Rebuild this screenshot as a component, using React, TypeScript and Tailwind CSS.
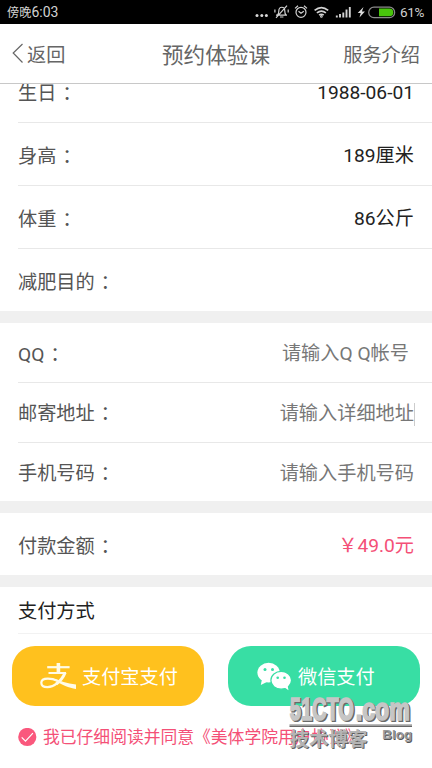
import React from "react";

const font = "font-['Roboto','Noto_Sans_CJK_SC',sans-serif]";

function Colon() {
  return <span lang="zh-TW" className="relative top-px left-px font-['Noto_Sans_CJK_TC',sans-serif]">：</span>;
}

function Row({ label, value, height, tone = "text-[#222]", line = true, shift = "", labelShift = "" }: {
  label: string; value?: React.ReactNode; height: string; tone?: string; line?: boolean; shift?: string; labelShift?: string;
}) {
  return (
    <div className={`flex shrink-0 flex-col ${height}`}>
      <div className="flex min-h-0 flex-1 items-center justify-between px-[18px] pt-[3px]">
        <span className={`text-[#555] ${labelShift}`}>{label}<Colon /></span>
        <span className={`${tone} ${shift}`}>{value}</span>
      </div>
      {line && <div className="ml-[18px] h-px shrink-0 bg-[#e8e8e8]" />}
    </div>
  );
}

function StatusIcons() {
  return (
    <svg width="146" height="24" viewBox="0 0 146 24" fill="none" stroke="#d2d2d2" strokeWidth="1.2">
      <g fill="#d8d8d8" stroke="none">
        <circle cx="3" cy="15.6" r="1.5" /><circle cx="7.8" cy="15.6" r="1.5" /><circle cx="12.4" cy="15.6" r="1.5" />
      </g>
      <path d="M22 15.2h11M23.5 15c1.3-1 1.3-2 1.3-4 0-5 6-5 6 0 0 2 0 3 1.2 4M26 17h3.4M33 5.6 22 17.8M20.9 9.5v3M34.2 9.5v3" />
      <circle cx="47" cy="12.3" r="5" />
      <path d="m44.5 11.2 2.5 2 2.8-2M41 8.4l3-2.6M53 8.4l-3-2.6" />
      <g strokeWidth="1.7">
        <path d="M60.6 10.4q6.8-5.7 13.6 0M62.9 12.9q4.5-3.5 9 0M65.1 15.1q2.3-1.7 4.6 0" />
        <circle cx="67.4" cy="16.4" r=".5" />
      </g>
      <path strokeWidth="1.9" d="M82.8 17.5v-2M86 17.5v-3.4M89.3 17.5v-5M92.5 17.5V9.4M95.8 17.5V7" />
      <path fill="#ddd" stroke="none" d="m109.5 7-5.8 6h3l-1.2 4.5 5.4-6h-3z" />
      <rect x="114.7" y="7.2" width="26" height="10.4" rx="5.2" stroke="#8b8b8b" />
      <path d="M125 8.6h10.5a3.8 3.8 0 0 1 0 7.6H125z" fill="#49c50c" stroke="none" />
    </svg>
  );
}

function AlipayMark() {
  return (
    <svg width="36" height="28" viewBox="0 0 36 28" fill="none" stroke="#fffbe8">
      <path strokeWidth="2.2" d="M7.2 5.2h22.4" />
      <path strokeWidth="3.6" d="M18.4 1v10" />
      <path strokeWidth="2" d="M8.5 11h17.5" />
      <path strokeWidth="3" d="M25.2 10.5c-2 5-5.5 9-9 11.5" />
      <path strokeWidth="2.2" d="M17 21.4c-3 2.4-6.3 3.8-9.5 3.8-3.7 0-6.2-1.7-6.2-4.4 0-2.7 2.8-4.2 6.6-4.2 3.5 0 6.5.8 9.6 2.2" />
      <path fill="#fffbe8" stroke="none" d="M12 16.2c8 2.2 15 5.4 24 6.4v4.4c-7-.8-14.5-4.6-21-8.2z" />
    </svg>
  );
}

function WeChatMark() {
  return (
    <svg width="35" height="29" viewBox="0 0 35 29">
      <ellipse cx="11.6" cy="10.6" rx="11.2" ry="9.8" fill="white" />
      <path d="m5 17-1.2 6 6-3z" fill="white" />
      <circle cx="8" cy="7.4" r="1.5" fill="#38dea4" /><circle cx="15.5" cy="7.4" r="1.5" fill="#38dea4" />
      <ellipse cx="24.2" cy="18.3" rx="10.3" ry="8.9" fill="white" stroke="#38dea4" strokeWidth="1.2" />
      <path d="m27 25 4.5 3.2-1-5z" fill="white" />
      <circle cx="20.7" cy="15.8" r="1.3" fill="#38dea4" /><circle cx="27.5" cy="15.8" r="1.3" fill="#38dea4" />
    </svg>
  );
}

function Watermark() {
  const wide = { textLength: 64, lengthAdjust: "spacingAndGlyphs" };
  const tail = { textLength: 54, lengthAdjust: "spacingAndGlyphs" };
  return (
    <svg className="absolute top-[692px] left-[286px]" width="130" height="62" viewBox="0 0 130 62">
      <g fontFamily="'Liberation Sans', sans-serif" fontWeight="700" fontSize="32">
        <g fill="#696969" stroke="#696969" strokeWidth="2.2">
          <text x="5" y="29" {...wide}>51CTO</text>
          <text x="71" y="29" {...tail}>.com</text>
        </g>
        <g fill="#c6c6c6" stroke="#c6c6c6" strokeWidth="1.7">
          <text x="3.8" y="27.6" {...wide}>51CTO</text>
          <text x="69.8" y="27.6" {...tail}>.com</text>
        </g>
      </g>
      <rect x="3.5" y="32" width="122.5" height="1.5" fill="#bbb" />
      <rect x="3.5" y="33.5" width="122.5" height="1.5" fill="#666" />
      <g fontFamily="'Liberation Sans', sans-serif" fontWeight="700" fontSize="12.5">
        <text x="97" y="48" textLength="30" lengthAdjust="spacingAndGlyphs" fill="#555">Blog</text>
        <text x="96.2" y="47.2" textLength="30" lengthAdjust="spacingAndGlyphs" fill="#999">Blog</text>
      </g>
      <g fontFamily="'Noto Sans CJK SC', sans-serif" fontWeight="700" fontSize="19.5">
        <text x="4.4" y="55.4" textLength="78" fill="#606060">技术博客</text>
        <text x="3.4" y="54.4" textLength="78" fill="#b4b4b4">技术博客</text>
      </g>
    </svg>
  );
}

export default function App() {
  return (
    <div className={`relative flex h-[768px] w-[432px] flex-col overflow-hidden bg-white text-[19.2px] leading-6 ${font}`}>
      <div className="flex h-6 shrink-0 items-center bg-black px-[7px] text-[#d2d2d2]">
        <span className="text-[12.2px]">傍晚<span className="text-[14px]">6:03</span></span>
        <div className="ml-auto flex items-center"><StatusIcons /><span className="w-[25px] text-[13.5px] tracking-[-0.3px]">61%</span></div>
      </div>
      <header className="grid h-[60px] shrink-0 grid-cols-3 items-center border-b border-[#c8c8c8] px-3 pt-[5px] text-[#666]">
        <span className="flex items-center">
          <svg className="-mt-1" width="15" height="22" viewBox="0 0 15 22" fill="none" stroke="#666" strokeWidth="1.2"><path d="M10.5 1 1.2 10l9.3 9.5" /></svg>返回
        </span>
        <span className="text-center text-[21.6px]">预约体验课</span>
        <span className="text-right">服务介绍</span>
      </header>
      <div className="flex h-[39px] shrink-0 flex-col justify-end overflow-hidden">
        <Row label="生日" value="1988-06-01" height="h-[63px]" />
      </div>
      <Row label="身高" value="189厘米" height="h-[63px]" />
      <Row label="体重" value="86公斤" height="h-[63px]" />
      <Row label="减肥目的" height="h-[62px]" line={false} />
      <div className="h-3 shrink-0 bg-[#f0f0f0]" />
      <Row label="QQ" value="请输入Q Q帐号" height="h-[60px]" tone="text-[#777]" shift="mr-[5px]" labelShift="-mt-px" />
      <Row label="邮寄地址" value={<span className="flex items-center">请输入详细地址<i className="-mr-px h-[23px] w-px bg-[#ccc]" /></span>} height="h-[60px]" tone="text-[#777]" labelShift="-mt-[2px]" />
      <Row label="手机号码" value="请输入手机号码" height="h-[58px]" tone="text-[#777]" line={false} labelShift="-mt-px" />
      <div className="h-3 shrink-0 bg-[#f0f0f0]" />
      <Row label="付款金额" value="￥49.0元" height="h-[62px]" tone="text-[#f45077]" line={false} />
      <div className="h-3 shrink-0 bg-[#f0f0f0]" />
      <section className="flex h-[47px] shrink-0 flex-col text-[#222]">
        <div className="flex flex-1 items-center pt-[3px] pl-[18px]">支付方式</div>
        <div className="ml-[18px] h-px bg-[#f2f2f2]" />
      </section>
      <div className="mt-3 grid shrink-0 grid-cols-2 gap-6 px-3 text-white">
        <button className="flex h-[60px] items-center rounded-[23px] bg-[#ffc11e] pl-[28px]">
          <AlipayMark /><span className="mt-[3px] ml-[6px]">支付宝支付</span>
        </button>
        <button className="flex h-[60px] items-center rounded-[23px] bg-[#38dea4] pl-[29px]">
          <WeChatMark /><span className="mt-[3px] ml-[6px]">微信支付</span>
        </button>
      </div>
      <div className="mt-[19px] flex shrink-0 items-center pl-[18px] text-[16.8px] text-[#f45077]">
        <svg className="mr-[6px]" width="19" height="19" viewBox="0 0 19 19"><circle cx="9.3" cy="9" r="9.1" fill="#fa587d" /><path d="m3.7 9.4 3.8 3.8 7.4-8" fill="none" stroke="white" strokeWidth="1.2" /></svg>
        <span>我已仔细阅读并同意《美体学院用户协议》</span>
      </div>
      <Watermark />
    </div>
  );
}
